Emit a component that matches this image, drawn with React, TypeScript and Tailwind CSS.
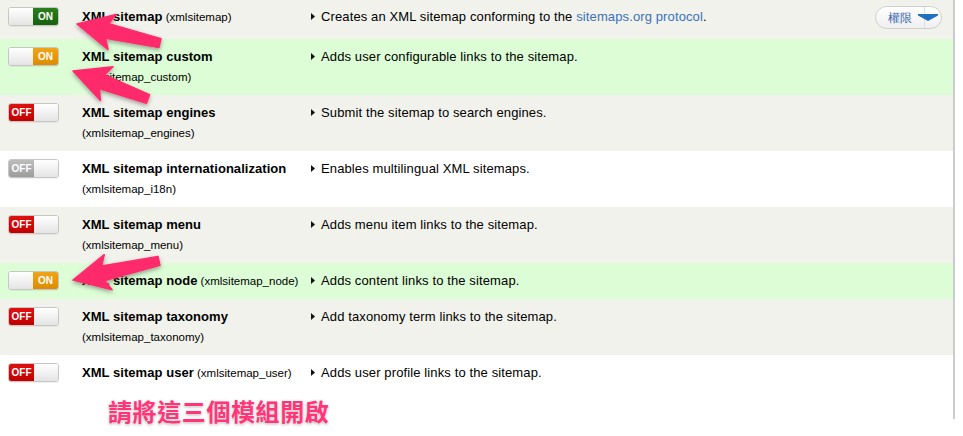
import React from 'react'

type ToggleState = 'on' | 'pending' | 'off' | 'disabled'

interface ModuleRow {
  name: string
  machine: string
  inline: boolean
  state: ToggleState
  bg: string
  desc: React.ReactNode
}

const rows: ModuleRow[] = [
  {
    name: 'XML sitemap',
    machine: 'xmlsitemap',
    inline: true,
    state: 'on',
    bg: 'bg-[#f2f2ec]',
    desc: (
      <>
        Creates an XML sitemap conforming to the <span className="text-[#3a71b8]">sitemaps.org protocol</span>.
      </>
    ),
  },
  { name: 'XML sitemap custom', machine: 'xmlsitemap_custom', inline: false, state: 'pending', bg: 'bg-[#dcfdd6]', desc: 'Adds user configurable links to the sitemap.' },
  { name: 'XML sitemap engines', machine: 'xmlsitemap_engines', inline: false, state: 'off', bg: 'bg-[#f2f2ec]', desc: 'Submit the sitemap to search engines.' },
  { name: 'XML sitemap internationalization', machine: 'xmlsitemap_i18n', inline: false, state: 'disabled', bg: 'bg-white', desc: 'Enables multilingual XML sitemaps.' },
  { name: 'XML sitemap menu', machine: 'xmlsitemap_menu', inline: false, state: 'off', bg: 'bg-[#f2f2ec]', desc: 'Adds menu item links to the sitemap.' },
  { name: 'XML sitemap node', machine: 'xmlsitemap_node', inline: true, state: 'pending', bg: 'bg-[#dcfdd6]', desc: 'Adds content links to the sitemap.' },
  { name: 'XML sitemap taxonomy', machine: 'xmlsitemap_taxonomy', inline: false, state: 'off', bg: 'bg-[#f2f2ec]', desc: 'Add taxonomy term links to the sitemap.' },
  { name: 'XML sitemap user', machine: 'xmlsitemap_user', inline: true, state: 'off', bg: 'bg-white', desc: 'Adds user profile links to the sitemap.' },
]

function Toggle({ state }: { state: ToggleState }) {
  const on = state === 'on' || state === 'pending'
  const blank = <div className="flex-1 bg-gradient-to-b from-white to-[#e4e4e4]" />
  return (
    <div className="flex h-[19px] w-[51px] overflow-hidden rounded-[3px] border border-[#c6c6c6] shadow-[0_1px_0_rgba(0,0,0,0.05)]">
      {on ? (
        <>
          {blank}
          <div
            className={`flex w-[25px] items-center justify-center text-[10px] font-bold text-white ${
              state === 'on' ? 'bg-gradient-to-b from-[#2b7f1f] to-[#15620d]' : 'bg-gradient-to-b from-[#f0a41a] to-[#dd8c00]'
            }`}
          >
            ON
          </div>
        </>
      ) : (
        <>
          <div
            className={`flex w-[25px] items-center justify-center text-[10px] font-bold text-white ${
              state === 'off' ? 'bg-gradient-to-b from-[#e01010] to-[#c00000]' : 'bg-gradient-to-b from-[#bdbdbd] to-[#9c9c9c] text-[#eee]'
            }`}
          >
            OFF
          </div>
          {blank}
        </>
      )}
    </div>
  )
}

function PermissionButton() {
  return (
    <div className="flex h-[23px] w-[67px] items-center rounded-full border border-[#cfcfcf] bg-gradient-to-b from-white to-[#efefef] pl-[12px]">
      <span className="text-[12px] text-[#3a68b0]">權限</span>
      <span className="relative ml-[6px] h-full w-[20px]">
        <span className="absolute left-[6px] top-0 h-full w-px bg-[#dddddd]" />
        <svg className="absolute left-0 top-[7px]" width="20" height="7" viewBox="0 0 20 7">
          <path d="M0 0 H20 V1.5 L10 7 L0 1.5 Z" fill="#1f6fc2" />
        </svg>
      </span>
    </div>
  )
}

type Pt = [number, number]

function arrowPoints(tail: Pt, tip: Pt) {
  const dx = tip[0] - tail[0]
  const dy = tip[1] - tail[1]
  const len = Math.hypot(dx, dy)
  const d: Pt = [dx / len, dy / len]
  const n: Pt = [-d[1], d[0]]
  const headL = 31
  const base: Pt = [tip[0] - d[0] * headL, tip[1] - d[1] * headL]
  const barb: Pt = [base[0] - d[0] * 5, base[1] - d[1] * 5]
  const at = (p: Pt, w: number): string => `${p[0] + n[0] * w},${p[1] + n[1] * w}`
  return [at(tail, 4.5), at(base, 7.5), at(barb, 18), at(tip, 0), at(barb, -18), at(base, -7.5), at(tail, -4.5)].join(' ')
}

function Arrows() {
  const arrows: [Pt, Pt][] = [
    [[160, 43], [77, 24]],
    [[148, 99], [73, 71]],
    [[159, 261], [73, 280]],
  ]
  return (
    <svg className="pointer-events-none absolute left-0 top-0" width="963" height="436" viewBox="0 0 963 436">
      <defs>
        <filter id="arrowShadow" x="-20%" y="-20%" width="140%" height="140%">
          <feDropShadow dx="0" dy="2" stdDeviation="2" floodColor="#000" floodOpacity="0.35" />
        </filter>
      </defs>
      {arrows.map(([tail, tip], i) => (
        <polygon key={i} points={arrowPoints(tail, tip)} fill="#ff2b6c" stroke="#ff2b6c" strokeWidth="1.5" strokeLinejoin="round" filter="url(#arrowShadow)" />
      ))}
    </svg>
  )
}

export default function App() {
  return (
    <div className="relative h-[436px] w-[963px] overflow-hidden bg-white font-['Liberation_Sans',Arial,sans-serif] text-[13px] text-black">
      <div className="h-[419px] w-[955px] border-r-2 border-[#cccccc]">
        {rows.map((row, index) => (
          <div key={row.machine} className={`flex ${row.bg} ${index === 0 ? 'h-[39px] pt-[6px]' : 'py-2'}`}>
            <div className={`w-[82px] pl-2 ${index === 0 ? 'pt-px' : ''}`}>
              <Toggle state={row.state} />
            </div>
            <div className={`w-[229px] leading-5 ${index === 0 ? 'pt-px' : ''}`}>
              <span className="font-bold tracking-[0.05px]">{row.name}</span>
              {row.inline ? (
                <span className="text-[11.5px]"> ({row.machine})</span>
              ) : (
                <div className="text-[11.5px]">({row.machine})</div>
              )}
            </div>
            <div className={`flex flex-1 items-start leading-5 tracking-[0.12px] ${index === 0 ? 'pt-px' : ''}`}>
              <svg className="mr-[6px] mt-[6px] shrink-0" width="4" height="7" viewBox="0 0 4 7">
                <path d="M0 0 L4 3.5 L0 7 Z" fill="#111" />
              </svg>
              <span>{row.desc}</span>
            </div>
            {index === 0 && (
              <div className="pr-[11px]">
                <PermissionButton />
              </div>
            )}
          </div>
        ))}
      </div>
      <Arrows />
      <div className="absolute left-[108px] top-[395px] font-['Noto_Sans_CJK_TC',sans-serif] text-[24px] font-bold leading-[32px] tracking-[0.6px] text-[#ff3577] [text-shadow:0_0_2px_#fff,0_1px_3px_rgba(0,0,0,0.35)]">
        請將這三個模組開啟
      </div>
    </div>
  )
}
